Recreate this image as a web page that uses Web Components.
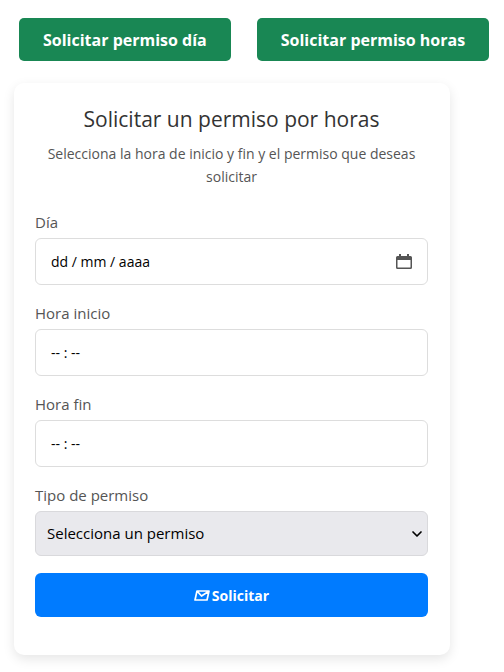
<!DOCTYPE html>
<html lang="es">
    <head>
        <meta charset="utf-8"/>
        <meta name="viewport" content="width=device-width, initial-scale=1"/>
        <title>Solicitar permiso</title>
        <style>
            body {
                margin: 0;
                background-color: white;
                color: #555;
                font-family: "Segoe UI", "Open Sans", "Noto Sans", sans-serif;
                font-size: 15px;
                line-height: 23px;
            }
        </style>
    </head>
    <body>
        <leave-page></leave-page>

        <script>
            // Green button that picks the kind of request.
            class NavButton extends HTMLElement {
                constructor() {
                    super();
                    this.attachShadow({mode: 'open'}).innerHTML = `
                        <style>
                            :host {
                                display: block;
                            }
                            button {
                                height: 43px;
                                padding: 2px 24px 0;
                                border: none;
                                border-radius: 5px;
                                background-color: #198754;
                                color: white;
                                font: inherit;
                                font-size: 16px;
                                font-weight: bold;
                                white-space: nowrap;
                                cursor: pointer;
                            }
                        </style>
                        <button type="button"><slot></slot></button>
                    `;
                }
            }
            window.customElements.define("nav-button", NavButton);


            // White card with a title, an introduction and the form content.
            class FormCard extends HTMLElement {
                constructor() {
                    super();
                    this.attachShadow({mode: 'open'}).innerHTML = `
                        <style>
                            :host {
                                display: block;
                                box-sizing: border-box;
                                padding: 22px 22px 38px 21px;
                                border-radius: 10px;
                                background-color: white;
                                box-shadow: 0 4px 12px rgba(0, 0, 0, 0.1);
                            }
                            h2 {
                                margin: 0 0 8px;
                                color: #333;
                                font-size: 21px;
                                font-weight: normal;
                                line-height: 29px;
                                text-align: center;
                            }
                            p {
                                margin: 0 0 23px;
                                font-size: 14px;
                                text-align: center;
                            }
                        </style>
                        <h2><slot name="title"></slot></h2>
                        <p><slot name="intro"></slot></p>
                        <slot></slot>
                    `;
                }
            }
            window.customElements.define("form-card", FormCard);


            // Labelled box for a date or an hour. With "calendar" it gets a picker button.
            class TimeField extends HTMLElement {
                constructor() {
                    super();
                    this.attachShadow({mode: 'open'});
                }

                connectedCallback() {
                    const calendar = `
                        <button type="button" aria-label="Abrir calendario">
                            <svg width="16" height="16" viewBox="0 0 16 16" aria-hidden="true">
                                <path fill="#555" fill-rule="evenodd" d="M3 0h2v2h6V0h2v2h1.500a1.500 1.500 0 0 1 1.500 1.500v10a1.500 1.500 0 0 1-1.500 1.500h-13A1.500 1.500 0 0 1 0 13.500v-10A1.500 1.500 0 0 1 1.500 2H3zM1.500 6v7a.5.5 0 0 0 .5.5h12a.5.5 0 0 0 .5-.5V6z"/>
                            </svg>
                        </button>
                    `;
                    this.shadowRoot.innerHTML = `
                        <style>
                            :host {
                                display: block;
                            }
                            label {
                                display: block;
                                margin-bottom: 5px;
                                line-height: 22px;
                            }
                            .box {
                                display: flex;
                                align-items: center;
                                box-sizing: border-box;
                                height: 47px;
                                padding: 0 15px;
                                border: 1px solid #ddd;
                                border-radius: 6px;
                                background-color: white;
                            }
                            input {
                                flex: 1;
                                min-width: 0;
                                padding: 0;
                                border: none;
                                outline: none;
                                background: none;
                                color: black;
                                font: inherit;
                                font-size: 14px;
                            }
                            input::placeholder {
                                color: black;
                                opacity: 1;
                            }
                            button {
                                display: flex;
                                padding: 0;
                                border: none;
                                background: none;
                                cursor: pointer;
                            }
                        </style>
                        <label for="field">${this.getAttribute("label")}</label>
                        <div class="box">
                            <input id="field" type="text" placeholder="${this.getAttribute("format")}"/>
                            ${this.hasAttribute("calendar") ? calendar : ""}
                        </div>
                    `;
                }
            }
            window.customElements.define("time-field", TimeField);


            class SelectField extends HTMLElement {
                constructor() {
                    super();
                    this.attachShadow({mode: 'open'});
                }

                connectedCallback() {
                    this.shadowRoot.innerHTML = `
                        <style>
                            :host {
                                display: block;
                            }
                            label {
                                display: block;
                                margin-bottom: 5px;
                                line-height: 22px;
                            }
                            .box {
                                display: grid;
                                align-items: center;
                            }
                            select, svg {
                                grid-area: 1 / 1;
                            }
                            select {
                                appearance: none;
                                width: 100%;
                                height: 45px;
                                padding: 0 28px 0 11px;
                                border: 1px solid #d9d9dc;
                                border-radius: 6px;
                                background-color: #e9e9ed;
                                color: black;
                                font: inherit;
                            }
                            svg {
                                justify-self: end;
                                margin-right: 5px;
                                pointer-events: none;
                            }
                        </style>
                        <label for="field">${this.getAttribute("label")}</label>
                        <div class="box">
                            <select id="field">
                                <option>${this.getAttribute("prompt")}</option>
                            </select>
                            <svg width="12" height="8" viewBox="0 0 12 8" aria-hidden="true">
                                <path d="M2 2l4 4 4-4" fill="none" stroke="black" stroke-width="1.700" stroke-linecap="round" stroke-linejoin="round"/>
                            </svg>
                        </div>
                    `;
                }
            }
            window.customElements.define("select-field", SelectField);


            class SubmitButton extends HTMLElement {
                constructor() {
                    super();
                    this.attachShadow({mode: 'open'}).innerHTML = `
                        <style>
                            :host {
                                display: block;
                            }
                            button {
                                display: flex;
                                align-items: center;
                                justify-content: center;
                                gap: 2px;
                                width: 100%;
                                height: 44px;
                                padding: 0;
                                border: none;
                                border-radius: 6px;
                                background-color: #007bff;
                                color: white;
                                font: inherit;
                                font-size: 14px;
                                font-weight: bold;
                                cursor: pointer;
                            }
                        </style>
                        <button type="submit">
                            <svg width="16" height="11" viewBox="0 0 16 11" aria-hidden="true">
                                <path d="M3 1h12l-2 9H1zM3.500 1.500l4 4.500 7-4.500" fill="none" stroke="white" stroke-width="1.700" stroke-linejoin="round"/>
                            </svg>
                            <slot></slot>
                        </button>
                    `;
                }
            }
            window.customElements.define("submit-button", SubmitButton);


            class LeavePage extends HTMLElement {
                constructor() {
                    super();
                    this.attachShadow({mode: 'open'}).innerHTML = `
                        <style>
                            :host {
                                display: block;
                                padding: 18px 14px 17px;
                            }
                            nav {
                                display: flex;
                                gap: 26px;
                                margin: 0 0 22px 5px;
                            }
                            form-card {
                                max-width: 436px;
                            }
                            form {
                                display: flex;
                                flex-direction: column;
                                gap: 17px;
                            }
                        </style>
                        <nav>
                            <nav-button>Solicitar permiso día</nav-button>
                            <nav-button>Solicitar permiso horas</nav-button>
                        </nav>
                        <form-card>
                            <span slot="title">Solicitar un permiso por horas</span>
                            <span slot="intro">Selecciona la hora de inicio y fin y el permiso que deseas solicitar</span>
                            <form>
                                <time-field label="Día" format="dd / mm / aaaa" calendar></time-field>
                                <time-field label="Hora inicio" format="-- : --"></time-field>
                                <time-field label="Hora fin" format="-- : --"></time-field>
                                <select-field label="Tipo de permiso" prompt="Selecciona un permiso"></select-field>
                                <submit-button>Solicitar</submit-button>
                            </form>
                        </form-card>
                    `;
                }
            }
            window.customElements.define("leave-page", LeavePage);
        </script>
    </body>
</html>
